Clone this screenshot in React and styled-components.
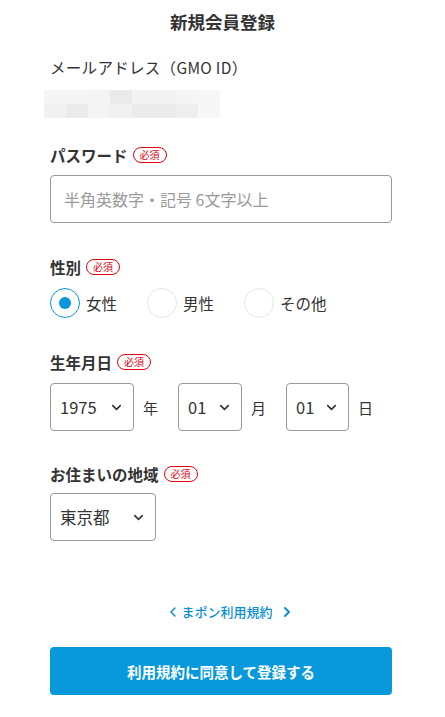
import React, { useState } from 'react'
import styled, { createGlobalStyle } from 'styled-components'
import { ChevronDown, ChevronLeft, ChevronRight } from 'lucide-react'

const GlobalStyle = createGlobalStyle`
  body {
    margin: 0;
    background: #fff;
    font-family: "Noto Sans CJK JP", "Noto Sans", sans-serif;
    color: #333;
  }
`

const blurCells = [
  ['#f5f5f5', '#f5f5f5', '#f4f4f4', '#eaeaea', '#f3f3f3', '#f3f3f3', '#f5f5f5', '#f7f7f7'],
  ['#f1f1f1', '#ebebeb', '#f4f4f4', '#f1f1f1', '#ebebeb', '#ebebeb', '#eeeeee', '#f7f7f7'],
]

const RegisterForm = () => {
  const [gender, setGender] = useState('female')
  return (
    <Page>
      <GlobalStyle />
      <Title>新規会員登録</Title>

      <EmailLabel>メールアドレス（GMO ID）</EmailLabel>
      <Mosaic>
        {blurCells.flat().map((c, i) => (
          <Cell key={i} $color={c} />
        ))}
      </Mosaic>

      <Label $top={26}>
        パスワード<Required>必須</Required>
      </Label>
      <TextInput type='password' placeholder='半角英数字・記号 6文字以上' />

      <Label $top={33}>
        性別<Required>必須</Required>
      </Label>
      <RadioRow>
        {[
          ['female', '女性'],
          ['male', '男性'],
          ['other', 'その他'],
        ].map(([key, text]) => (
          <RadioItem key={key} onClick={() => setGender(key)}>
            <RadioCircle $checked={gender === key} />
            {text}
          </RadioItem>
        ))}
      </RadioRow>

      <Label $top={33}>
        生年月日<Required>必須</Required>
      </Label>
      <DateRow>
        <SelectBox $width={84}>
          <Select defaultValue='1975'>
            <option>1975</option>
          </Select>
          <Chevron size={15} strokeWidth={2.6} />
        </SelectBox>
        <Unit $width={35}>年</Unit>
        <SelectBox $width={64}>
          <Select defaultValue='01'>
            <option>01</option>
          </Select>
          <Chevron size={15} strokeWidth={2.6} />
        </SelectBox>
        <Unit $width={35}>月</Unit>
        <SelectBox $width={63}>
          <Select defaultValue='01'>
            <option>01</option>
          </Select>
          <Chevron size={15} strokeWidth={2.6} />
        </SelectBox>
        <Unit>日</Unit>
      </DateRow>

      <Label $top={32}>
        お住まいの地域<Required>必須</Required>
      </Label>
      <SelectBox $width={106} $top={8}>
        <Select defaultValue='東京都'>
          <option>東京都</option>
        </Select>
        <Chevron size={15} strokeWidth={2.6} />
      </SelectBox>

      <TermsLink href='#'>
        <ChevronLeft size={16} strokeWidth={2.2} />
        まポン利用規約
        <ChevronRight size={16} strokeWidth={3} />
      </TermsLink>

      <SubmitButton type='button'>利用規約に同意して登録する</SubmitButton>
    </Page>
  )
}

const Page = styled.main`
  width: 342px;
  margin-left: 50px;
  padding-top: 10px;
  padding-bottom: 22px;
  display: flex;
  flex-direction: column;
  align-items: flex-start;
`

const Title = styled.h1`
  margin: 0 0 0 -50px;
  width: 445px;
  text-align: center;
  font-size: 17.5px;
  line-height: 24px;
  font-weight: 700;
  color: #333;
`

const EmailLabel = styled.div`
  margin-top: 22px;
  font-size: 15.5px;
  line-height: 22px;
  letter-spacing: 0.3px;
  color: #333;
`

const Mosaic = styled.div`
  margin: 12px 0 0 -6px;
  display: grid;
  grid-template-columns: repeat(8, 22px);
  grid-auto-rows: 14px;
`

const Cell = styled.span`
  background: ${(p) => p.$color};
`

const Label = styled.div`
  margin-top: ${(p) => p.$top}px;
  display: flex;
  align-items: center;
  font-size: 15.5px;
  line-height: 22px;
  font-weight: 700;
  color: #333;
`

const Required = styled.span`
  margin-left: 5px;
  height: 16px;
  padding: 0 6px;
  border: 1px solid #e60012;
  border-radius: 9px;
  box-sizing: border-box;
  display: inline-flex;
  align-items: center;
  font-size: 10px;
  line-height: 1;
  font-weight: 400;
  color: #e60012;
`

const TextInput = styled.input`
  margin-top: 9px;
  width: 342px;
  height: 48px;
  box-sizing: border-box;
  border: 1px solid #999;
  border-radius: 4px;
  padding: 0 13px;
  font-family: inherit;
  font-size: 16px;
  color: #333;
  outline: none;
  &::placeholder {
    color: #9a9a9a;
  }
`

const RadioRow = styled.div`
  margin-top: 10px;
  display: flex;
`

const RadioItem = styled.label`
  width: 97px;
  display: flex;
  align-items: center;
  gap: 6px;
  font-size: 15.5px;
  color: #333;
  cursor: pointer;
`

const RadioCircle = styled.span`
  width: 30px;
  height: 30px;
  box-sizing: border-box;
  border-radius: 50%;
  border: 1px solid ${(p) => (p.$checked ? '#0a96dc' : '#e6e6e6')};
  display: flex;
  align-items: center;
  justify-content: center;
  &::after {
    content: '';
    width: 12px;
    height: 12px;
    border-radius: 50%;
    background: ${(p) => (p.$checked ? '#0a96dc' : 'transparent')};
  }
`

const DateRow = styled.div`
  margin-top: 10px;
  display: flex;
  align-items: center;
`

const SelectBox = styled.div`
  position: relative;
  width: ${(p) => p.$width}px;
  height: 48px;
  flex-shrink: 0;
  margin-top: ${(p) => p.$top || 0}px;
`

const Select = styled.select`
  appearance: none;
  width: 100%;
  height: 100%;
  box-sizing: border-box;
  border: 1px solid #999;
  border-radius: 4px;
  background: #fff;
  padding: 0 0 0 9px;
  font-family: inherit;
  font-size: 16.5px;
  color: #333;
  outline: none;
`

const Chevron = styled(ChevronDown)`
  position: absolute;
  right: 10px;
  top: 17px;
  color: #333;
  pointer-events: none;
`

const Unit = styled.span`
  margin-left: 9px;
  width: ${(p) => (p.$width ? `${p.$width}px` : 'auto')};
  font-size: 15px;
  color: #333;
`

const TermsLink = styled.a`
  align-self: center;
  margin: 61px 0 0 18px;
  display: flex;
  align-items: center;
  font-size: 13px;
  line-height: 20px;
  font-weight: 500;
  color: #0a8fd6;
  text-decoration: none;
  svg:first-child {
    margin-right: 0;
  }
  svg:last-child {
    margin-left: 6px;
  }
`

const SubmitButton = styled.button`
  margin-top: 25px;
  width: 342px;
  height: 48px;
  border: none;
  border-radius: 4px;
  background: #0899dc;
  color: #fff;
  font-family: inherit;
  font-size: 14.5px;
  font-weight: 700;
  cursor: pointer;
`

export default RegisterForm
